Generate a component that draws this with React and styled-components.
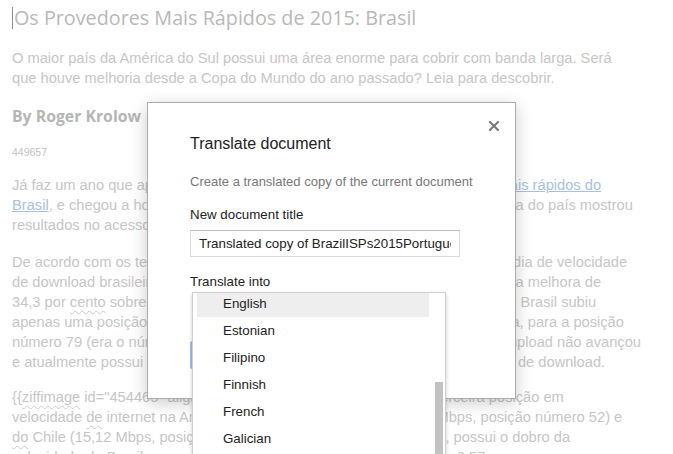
import React from "react";
import styled, { createGlobalStyle } from "styled-components";

const Global = createGlobalStyle`
  html, body { margin: 0; padding: 0; background: #fff; }
  body { width: 673px; height: 454px; overflow: hidden; position: relative; }
`;

const Page = styled.div`
  position: relative;
  width: 673px;
  height: 454px;
  overflow: hidden;
  background: #fff;
`;

const Doc = styled.div`
  display: flex;
  flex-direction: column;
  padding: 4px 0 0 12px;
  font-family: "Liberation Sans", Arial, sans-serif;
  color: #c6c6c6;
`;

const Title = styled.h1`
  margin: 0;
  font-family: "Open Sans", "DejaVu Sans", sans-serif;
  font-weight: normal;
  font-size: 19.75px;
  line-height: 28px;
  color: #b8b8b8;
  white-space: nowrap;
  display: flex;
  align-items: center;
  gap: 1px;
`;

const Caret = styled.span`
  display: inline-block;
  width: 1px;
  height: 22px;
  background: #8a8a8a;
`;

const Para = styled.p`
  margin: ${(p) => p.$mt}px 0 0;
  font-size: 14.67px;
  line-height: 20px;
`;

const Line = styled.span`
  display: block;
  white-space: nowrap;
`;

const Byline = styled.h2`
  margin: 16px 0 0;
  font-family: "Open Sans", "DejaVu Sans", sans-serif;
  font-size: 15.8px;
  line-height: 24px;
  font-weight: bold;
  color: #b5b5b5;
`;

const Small = styled.div`
  margin-top: 16px;
  font-size: 10.5px;
  line-height: 16px;
  color: #c2c2c2;
`;

const Link = styled.span`
  color: #a9bfe0;
  text-decoration: underline;
`;

const Spell = styled.span`
  text-decoration: underline wavy #cacaca;
  text-underline-offset: 3px;
  text-decoration-thickness: 1px;
`;

const Dialog = styled.div`
  position: absolute;
  left: 147px;
  top: 102px;
  width: 369px;
  height: 297px;
  box-sizing: border-box;
  background: #fff;
  border: 1px solid #acacac;
  box-shadow: 0 4px 16px rgba(0, 0, 0, 0.2);
  padding: 31px 30px 0 42px;
  display: flex;
  flex-direction: column;
  font-family: "Liberation Sans", Arial, sans-serif;
  color: #222;
`;

const Close = styled.button`
  position: absolute;
  top: 17px;
  right: 15px;
  width: 12px;
  height: 12px;
  padding: 0;
  border: 0;
  background: transparent;
  display: flex;
  align-items: center;
  justify-content: center;
`;

const DialogTitle = styled.div`
  font-size: 16px;
  line-height: 20px;
`;

const Desc = styled.div`
  margin-top: 20px;
  font-size: 13px;
  line-height: 16px;
  color: #777;
  white-space: nowrap;
`;

const Label = styled.div`
  margin-top: ${(p) => p.$mt}px;
  font-size: 13.33px;
  line-height: 16px;
  color: #222;
`;

const Input = styled.div`
  margin-top: 7px;
  width: 270px;
  height: 27px;
  box-sizing: border-box;
  border: 1px solid #d9d9d9;
  border-top-color: #c0c0c0;
  padding: 0 8px;
  font-size: 13.33px;
  line-height: 25px;
  color: #222;
`;

const InputText = styled.span`
  display: block;
  white-space: nowrap;
  overflow: hidden;
`;

const Select = styled.div`
  margin: 2px 0 0 2px;
  width: 252px;
  height: 27px;
`;

const Buttons = styled.div`
  margin-top: 22px;
  display: flex;
  gap: 16px;
`;

const Button = styled.div`
  height: 28px;
  min-width: 72px;
  box-sizing: border-box;
  border-radius: 2px;
  font-size: 11px;
  font-weight: bold;
  line-height: 26px;
  text-align: center;
  padding: 0 8px;
  background: ${(p) => (p.$primary ? "#9fbaea" : "#f5f5f5")};
  border: 1px solid ${(p) => (p.$primary ? "#a3bde9" : "#dcdcdc")};
  color: ${(p) => (p.$primary ? "#fff" : "#444")};
`;

const Menu = styled.div`
  position: absolute;
  left: 44px;
  top: 189px;
  width: 254px;
  height: 240px;
  box-sizing: border-box;
  background: #fff;
  border: 1px solid #cfcfcf;
  box-shadow: 0 2px 4px rgba(0, 0, 0, 0.2);
  display: flex;
  overflow: hidden;
`;

const MenuItems = styled.div`
  flex: 1;
  padding-left: 4px;
  display: flex;
  flex-direction: column;
  margin-top: -3px;
`;

const MenuItem = styled.div`
  height: 27px;
  line-height: 27px;
  padding-left: 26px;
  font-size: 13.33px;
  color: #222;
  background: ${(p) => (p.$active ? "#eeeeee" : "transparent")};
`;

const Track = styled.div`
  width: 16px;
  display: flex;
  justify-content: flex-end;
  padding: 89px 2px 0 0;
  box-sizing: border-box;
`;

const Thumb = styled.div`
  width: 8px;
  height: 200px;
  background: #c2c2c2;
`;

const languages = ["English", "Estonian", "Filipino", "Finnish", "French", "Galician", "Georgian", "German"];

export default function App() {
  return (
    <Page>
      <Global />
      <Doc>
        <Title>
          <Caret />
          Os Provedores Mais Rápidos de 2015: Brasil
        </Title>
        <Para $mt={16}>
          <Line>O maior país da América do Sul possui uma área enorme para cobrir com banda larga. Será</Line>
          <Line>que houve melhoria desde a Copa do Mundo do ano passado? Leia para descobrir.</Line>
        </Para>
        <Byline>By Roger Krolow</Byline>
        <Small>449657</Small>
        <Para $mt={15}>
          <Line>
            Já faz um ano que apresentamos a nossa lista dos provedores de internet <Link>mais rápidos do</Link>
          </Line>
          <Line>
            <Link>Brasil</Link>, e chegou a hora de conferirmos se a nova infraestrutura de banda larga do país mostrou
          </Line>
          <Line>resultados no acesso à internet de alta velocidade.</Line>
        </Para>
        <Para $mt={17}>
          <Line>De acordo com os testes de nossos leitores no Speedtest.net em 2015, a média de velocidade</Line>
          <Line>de download brasileira em todo o país foi de 4,76 Mbps, o que representa uma melhora de</Line>
          <Line>
            34,3 por <Spell>cento</Spell> sobre o ano passado. Mas, apesar desse bom desempenho, o Brasil subiu
          </Line>
          <Line>apenas uma posição no ranking mundial de velocidade de download da Ookla, para a posição</Line>
          <Line>número 79 (era o número 80 em 2014). Por sua vez, a velocidade média de upload não avançou</Line>
          <Line>e atualmente possui apenas cerca de um terço da velocidade média nacional de download.</Line>
        </Para>
        <Para $mt={15}>
          <Line>
            {"{{"}
            <Spell>ziffimage</Spell> id="454465" align="center"{"}}"} O Brasil ocupa hoje só a terceira posição em
          </Line>
          <Line>
            velocidade <Spell>de</Spell> internet na América do Sul, atrás do Uruguai (6,34 Mbps, posição número 52) e
          </Line>
          <Line>
            <Spell>do</Spell> Chile (15,12 Mbps, posição número 41), que, com a fibra óptica, possui o dobro da
          </Line>
          <Line>velocidade do Brasil e ocupa a posição número 100 no ranking com 8,57</Line>
        </Para>
      </Doc>

      <Dialog>
        <Close aria-label="Close">
          <svg width="10" height="10" viewBox="0 0 10 10">
            <path d="M1 1 L9 9 M9 1 L1 9" stroke="#777" strokeWidth="2" strokeLinecap="square" />
          </svg>
        </Close>
        <DialogTitle>Translate document</DialogTitle>
        <Desc>Create a translated copy of the current document</Desc>
        <Label $mt={17}>New document title</Label>
        <Input>
          <InputText>Translated copy of BrazilISPs2015Portuguese</InputText>
        </Input>
        <Label $mt={17}>Translate into</Label>
        <Select />
        <Buttons>
          <Button $primary>Translate</Button>
          <Button>Cancel</Button>
        </Buttons>
        <Menu>
          <MenuItems>
            {languages.map((l, i) => (
              <MenuItem key={l} $active={i === 0}>
                {l}
              </MenuItem>
            ))}
          </MenuItems>
          <Track>
            <Thumb />
          </Track>
        </Menu>
      </Dialog>
    </Page>
  );
}
